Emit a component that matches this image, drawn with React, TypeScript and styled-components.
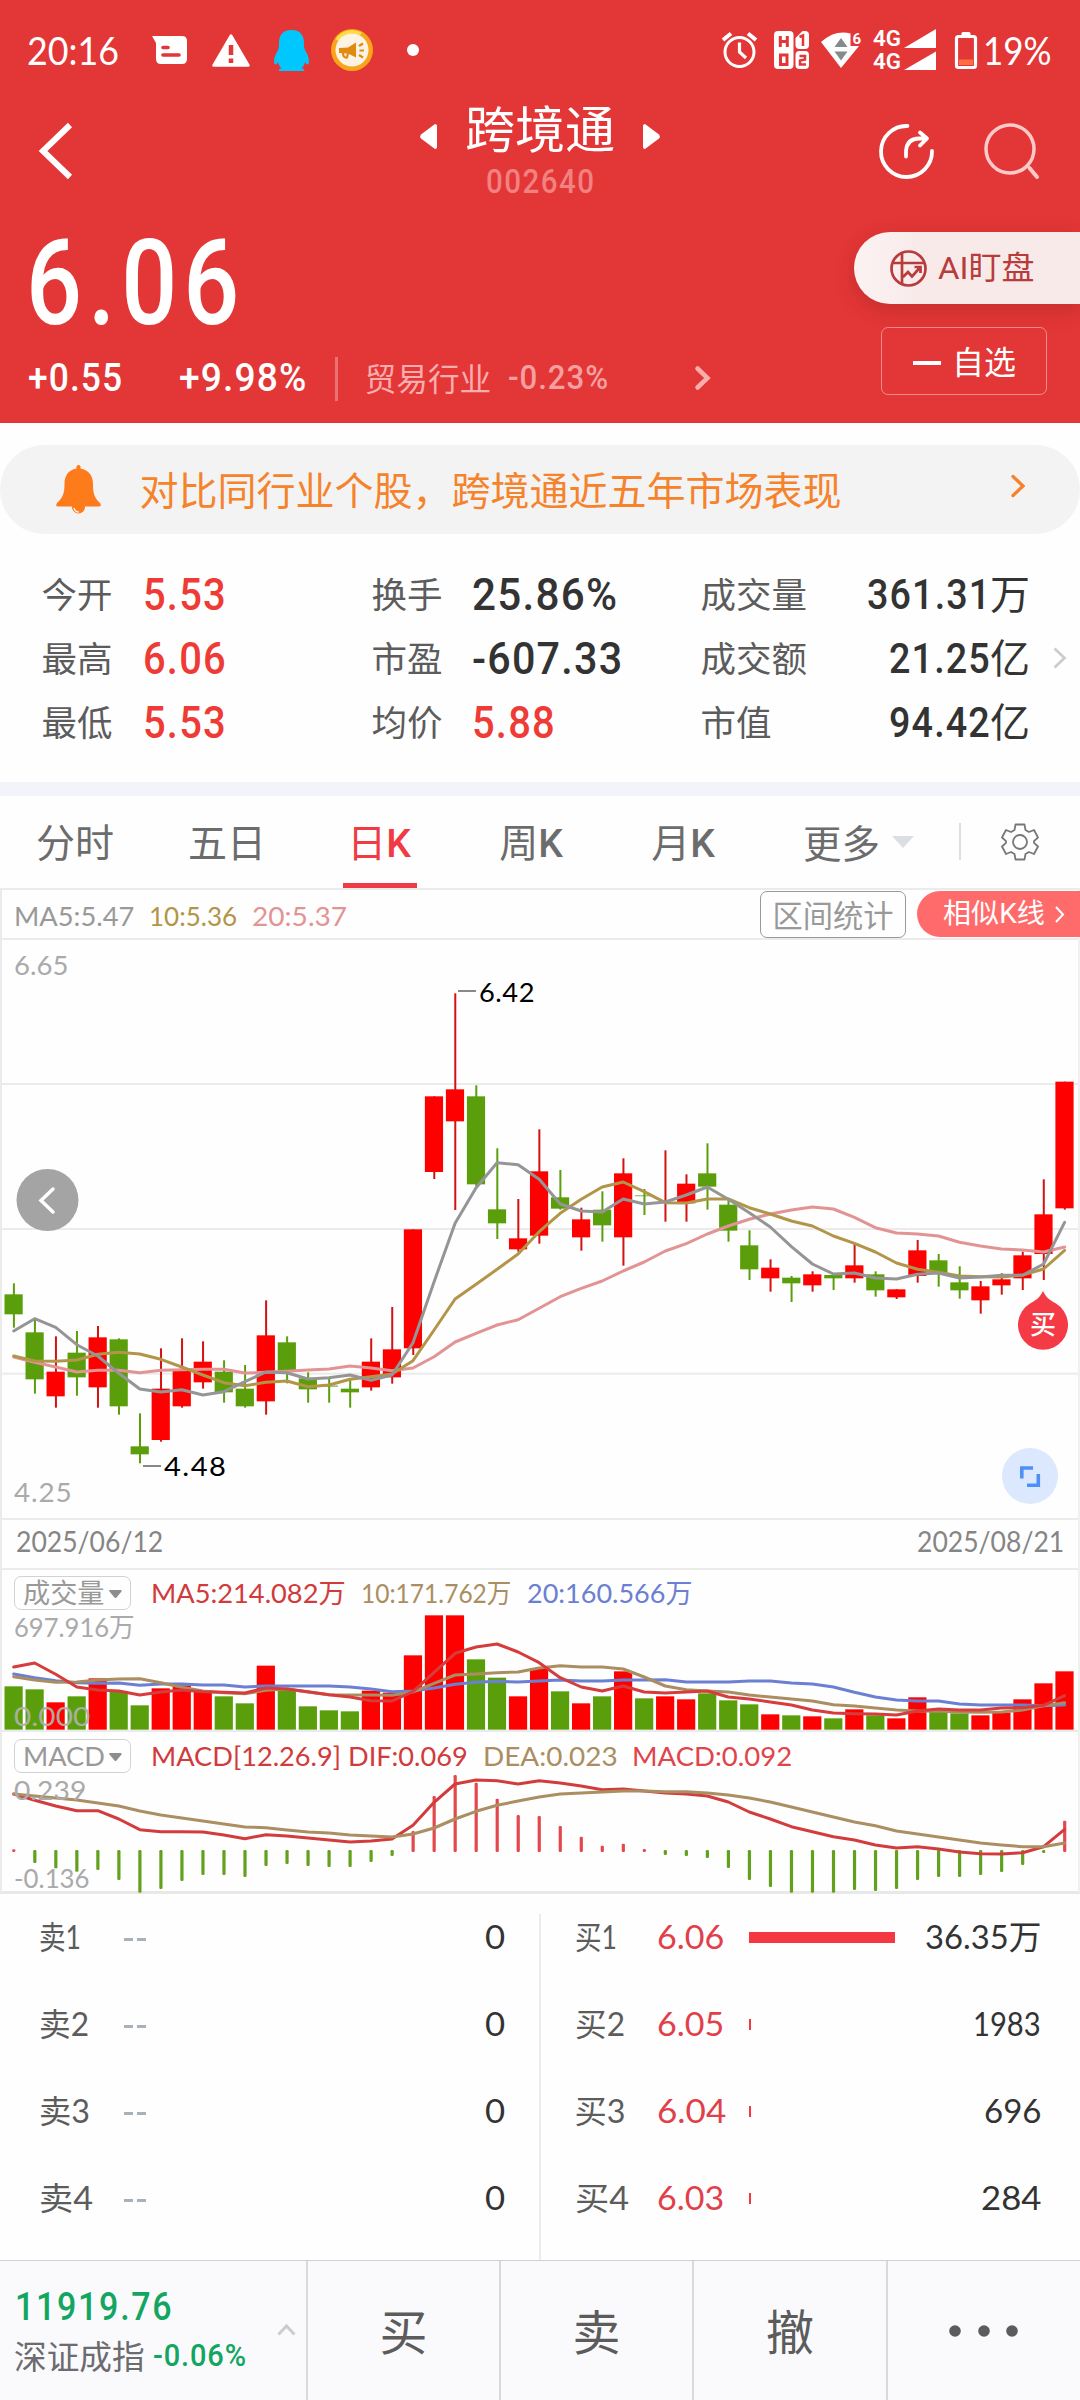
import React, { useLayoutEffect, useRef, useState } from 'react';
import styled, { createGlobalStyle, css } from 'styled-components';

const DIN = `Roboto, "Noto Sans CJK SC", sans-serif`;
const GEO = `Lato, "Noto Sans CJK SC", sans-serif`;
const CJK = `"Noto Sans CJK SC", sans-serif`;

const Global = createGlobalStyle`
  * { box-sizing: border-box; }
  body { margin: 0; background: #fefefe; font-family: ${CJK}; color: #333; }
`;

/* ---------- text that keeps to a known column width ---------- */

const FitBox = styled.span<{ $w: number; $ml: number; $up: number }>`
  display: block;
  flex: none;
  width: ${p => p.$w}px;
  margin-left: ${p => p.$ml}px;
  margin-top: ${p => p.$up}px;
  white-space: nowrap;
`;
const FitInner = styled.span<{ $font: string; $size: number; $weight: number; $color: string; $track: number }>`
  display: inline-block;
  vertical-align: top;
  transform-origin: 0 50%;
  font-family: ${p => p.$font};
  font-size: ${p => p.$size}px;
  font-weight: ${p => p.$weight};
  line-height: 1.2;
  letter-spacing: ${p => p.$track}em;
  margin-right: -${p => p.$track}em;
  color: ${p => p.$color};
`;

type FitProps = {
  w: number;
  size: number;
  children: React.ReactNode;
  font?: string;
  weight?: number;
  color?: string;
  track?: number;
  ml?: number;
  up?: number;
};

function Fit({ w, size, children, font = GEO, weight = 400, color = 'inherit', track = 0, ml = 0, up = 0 }: FitProps) {
  const ref = useRef<HTMLSpanElement>(null);
  const [scale, setScale] = useState(1);
  useLayoutEffect(() => {
    const measure = () => {
      if (ref.current) setScale(w / (ref.current.offsetWidth - track * size));
    };
    measure();
    document.fonts.ready.then(measure);
  }, [w, size, track]);
  return (
    <FitBox $w={w} $ml={ml} $up={up}>
      <FitInner
        ref={ref}
        $font={font}
        $size={size}
        $weight={weight}
        $color={color}
        $track={track}
        style={{ transform: `scaleX(${scale})` }}
      >
        {children}
      </FitInner>
    </FitBox>
  );
}

const Din = (p: FitProps) => <Fit font={DIN} weight={500} track={0.03} {...p} />;

/* ---------- shared pieces ---------- */

const Page = styled.div`
  width: 1080px;
  height: 2400px;
  overflow: hidden;
  display: flex;
  flex-direction: column;
  background: #fefefe;
`;
const Row = styled.div<{ $h: number; $pl?: number }>`
  display: flex;
  align-items: center;
  height: ${p => p.$h}px;
  padding-left: ${p => p.$pl ?? 0}px;
`;
const Icon = styled.svg<{ $ml?: number; $up?: number }>`
  display: block;
  flex: none;
  margin-left: ${p => p.$ml ?? 0}px;
  margin-top: ${p => p.$up ?? 0}px;
  overflow: visible;
`;

/* ---------- header ---------- */

const Header = styled.header`
  height: 423px;
  background: #e33636;
  color: #fff;
`;
const TitleBar = styled.div`
  display: grid;
  grid-template-columns: 420px 240px 1fr;
  height: 108px;
`;
const TitleCol = styled.div`
  display: flex;
  flex-direction: column;
  align-items: center;
`;
const TitleRow = styled.div`
  display: flex;
  justify-content: space-between;
  align-items: center;
  width: 240px;
  height: 60px;
`;
const StockName = styled.h1`
  margin: -9px 0 0;
  font: 400 50px/60px ${CJK};
`;
const PriceArea = styled.div`
  display: flex;
  justify-content: space-between;
  height: 215px;
`;
const PriceCol = styled.div`
  padding: 6px 0 0 26px;
`;
const ActionCol = styled.div`
  display: flex;
  flex-direction: column;
  align-items: flex-end;
  padding-top: 24px;
`;
const AiPill = styled.button`
  display: flex;
  align-items: center;
  width: 226px;
  height: 72px;
  border: 0;
  padding: 0 0 0 36px;
  border-radius: 36px 0 0 36px;
  background: linear-gradient(90deg, #fbf2f2, #f9eaea 30%);
  box-shadow: 0 6px 20px rgba(120, 30, 30, 0.28);
  color: #b83c3c;
`;
const FollowButton = styled.button`
  display: flex;
  align-items: center;
  width: 166px;
  height: 68px;
  margin: 23px 33px 0 0;
  padding: 0 0 2px 31px;
  border: 1.5px solid rgba(255, 255, 255, 0.42);
  border-radius: 7px;
  background: none;
  color: #fff;
  font: 400 32px/40px ${CJK};
`;
const Minus = styled.i`
  width: 28px;
  height: 4px;
  margin: 6px 11px 0 0;
  background: #fff;
`;
const VRule = styled.i<{ $h: number; $ml: number; $color: string; $w?: number }>`
  flex: none;
  width: ${p => p.$w ?? 2}px;
  height: ${p => p.$h}px;
  margin-left: ${p => p.$ml}px;
  background: ${p => p.$color};
`;
const Industry = styled.span`
  margin: -3px 0 0 27px;
  font: 400 31.7px/40px ${CJK};
  color: #f9adad;
`;

/* ---------- notice and stats ---------- */

const Notice = styled.div`
  display: flex;
  align-items: center;
  height: 89px;
  margin-top: 22px;
  padding-left: 56px;
  border-radius: 45px;
  background: #f3f3f3;
`;
const NoticeText = styled.span`
  margin: -4px 0 0 38.5px;
  width: 830px;
  font: 400 39px/60px ${CJK};
  color: #f5832b;
`;
const Stats = styled.section`
  display: grid;
  grid-template-columns: 330px 329px 371px 50px;
  grid-template-rows: repeat(3, 64px);
  align-items: center;
  height: 248px;
  padding: 28px 0 0 0;
`;
const Stat = styled.div`
  display: flex;
  align-items: center;
  padding-left: 41.5px;
`;
const StatLabel = styled.span<{ $w: number }>`
  width: ${p => p.$w}px;
  margin-top: -3px;
  font: 400 35.5px/50px ${CJK};
  color: #5c5c5c;
`;
const StatRight = styled.div`
  flex: 1;
  display: flex;
  justify-content: flex-end;
  align-items: center;
`;
const StatUnit = styled.span`
  font: 400 40px/50px ${CJK};
  color: #333;
  margin-top: -4px;
`;
const Band = styled.div`
  height: 14px;
  background: #f3f4f9;
`;

/* ---------- tabs ---------- */

const Tabs = styled.nav`
  display: flex;
  height: 92px;
`;
const Tab = styled.button<{ $active?: boolean }>`
  display: flex;
  flex-direction: column;
  align-items: center;
  justify-content: space-between;
  width: 152px;
  height: 92px;
  padding: 14px 0 0;
  border: 0;
  background: none;
  font: 400 39px/60px ${CJK};
  color: ${p => (p.$active ? '#f03a44' : '#6c6c6c')};
  b { font: 500 39px/50px ${DIN}; }
  span { display: block; margin-left: -2px; }
  &::after {
    content: '';
    width: 74px;
    height: 5px;
    background: ${p => (p.$active ? '#f03a44' : 'transparent')};
  }
`;
const MoreTab = styled.div`
  display: flex;
  align-items: center;
  height: 92px;
  padding-bottom: 2px;
  margin-left: 43px;
  font: 400 38.5px/60px ${CJK};
  color: #6c6c6c;
`;

/* ---------- chart ---------- */

const ChartFrame = styled.section`
  border: 2px solid #ebebeb;
  border-bottom: 3px solid #e8e8e8;
  border-right-color: #f0f0f0;
  height: 1006px;
`;
const Legend = styled.div`
  display: flex;
  align-items: center;
  height: 48px;
  padding-left: 12px;
`;
const RangeButton = styled.button`
  width: 146px;
  height: 47px;
  padding: 0;
  margin-left: 413px;
  border: 1.5px solid #999;
  border-radius: 7px;
  background: none;
  font: 400 30.3px/41px ${CJK};
  color: #999;
`;
const SimilarButton = styled.button`
  display: flex;
  flex: none;
  align-items: center;
  width: 165px;
  height: 46px;
  margin: 0 -4px 0 11px;
  padding: 0 0 1px 25px;
  border: 0;
  border-radius: 23px 0 0 23px;
  background: #ff6b6b;
  color: #fff;
`;
const Plot = styled.div<{ $h: number }>`
  position: relative;
  height: ${p => p.$h}px;
  margin: 0 -2px;
`;
const Canvas = styled.svg`
  display: block;
`;
const Pin = styled.div<{ $x: number; $y: number }>`
  position: absolute;
  left: ${p => p.$x}px;
  top: ${p => p.$y}px;
`;
const Dates = styled.div`
  display: flex;
  align-items: center;
  justify-content: space-between;
  height: 52px;
  padding: 0 14px 4px 14px;
  border-top: 2px solid #ebebeb;
  border-bottom: 2px solid #ebebeb;
  color: #858585;
`;
const IndicatorHead = styled.div<{ $top: number }>`
  position: absolute;
  left: 14px;
  top: ${p => p.$top}px;
  display: flex;
  align-items: center;
  height: 34px;
`;
const Picker = styled.button`
  display: flex;
  align-items: center;
  width: 117px;
  height: 34px;
  margin: 0;
  padding: 0 0 0 8px;
  border: 1.5px solid #d2d2d2;
  border-radius: 7px;
  background: none;
  color: #999;
`;

const RED = '#fe0000';
const GREEN = '#5a9f0b';
const cx = (i: number) => 13.7 + i * 21.018;

/* candle: direction, high, low, body top, body bottom (thirds of a pixel below the 1200 line) */
type Candle = ['u' | 'd', number, number, number, number];
const CANDLES: Candle[] = [
  ['d', 250, 383, 283, 343], ['d', 355, 581, 397, 538], ['u', 409, 623, 515, 589], ['d', 393, 587, 458, 532],
  ['u', 378, 623, 412, 562], ['d', 415, 644, 418, 619], ['d', 640, 790, 739, 763], ['u', 445, 725, 566, 720],
  ['u', 415, 623, 512, 619], ['u', 424, 566, 485, 547], ['d', 481, 608, 515, 577], ['d', 495, 623, 566, 619],
  ['u', 301, 644, 406, 604], ['d', 409, 550, 427, 512], ['d', 517, 608, 535, 568], ['d', 535, 608, 556, 561],
  ['d', 540, 623, 566, 577], ['u', 415, 572, 485, 562], ['u', 321, 551, 448, 532], ['u', 88, 465, 88, 445],
  ['u', -311, -63, -311, -84], ['u', -620, 30, -332, -236], ['d', -344, -42, -311, -47], ['d', -155, 117, 28, 70],
  ['u', -3, 155, 115, 148], ['u', -212, 131, -86, 107], ['d', -90, 29, -8, 26], ['u', 23, 152, 58, 112],
  ['d', -26, 125, 29, 76], ['u', -125, 197, -80, 112], ['d', -33, 45, -15, -11], ['u', -149, 65, 6, 6],
  ['u', -77, 65, -49, 10], ['d', -170, 29, -80, -40], ['d', -5, 125, 14, 92], ['d', 91, 240, 136, 208],
  ['u', 178, 275, 203, 235], ['d', 228, 306, 233, 250], ['u', 214, 275, 223, 256], ['d', 220, 270, 225, 235],
  ['u', 132, 248, 196, 235], ['d', 214, 290, 223, 271], ['u', 268, 297, 268, 292], ['u', 120, 248, 151, 228],
  ['d', 162, 260, 181, 218], ['d', 199, 296, 247, 271], ['u', 243, 341, 259, 301], ['u', 220, 284, 238, 256],
  ['u', 155, 270, 166, 235], ['u', -62, 240, 43, 162], ['u', -355, 29, -355, 25],
];
const PRICE_MA5 = [393, 356, 382, 434, 468, 520, 567, 576, 569, 585, 575, 545, 516, 518, 537, 533, 525, 541, 525, 428, 245, 70, -37, -112, -106, -62, 12, 33, 36, -3, 12, 6, -15, -39, -2, 38, 81, 140, 192, 222, 219, 234, 237, 223, 219, 234, 231, 226, 226, 192, 67];
const PRICE_MA10 = [468, 483, 484, 480, 463, 457, 462, 478, 501, 525, 548, 557, 547, 543, 560, 555, 538, 530, 522, 482, 390, 297, 253, 208, 162, 95, 40, -2, -39, -54, -25, 8, 9, -3, -3, 23, 42, 63, 78, 108, 130, 156, 189, 208, 217, 228, 230, 231, 225, 207, 151];
const PRICE_MA20 = [471, 487, 501, 516, 511, 511, 518, 511, 509, 508, 508, 519, 517, 514, 510, 507, 498, 504, 512, 504, 470, 426, 400, 375, 359, 325, 290, 265, 243, 213, 186, 153, 131, 102, 78, 58, 42, 30, 21, 27, 52, 83, 99, 102, 108, 127, 138, 147, 150, 156, 141];

/* volume and MACD data: thirds of a pixel below the 1560 line */
const VOLUME = [379, 388, 427, 409, 355, 394, 436, 385, 376, 392, 409, 430, 317, 390, 439, 451, 454, 392, 398, 286, 166, 166, 298, 353, 409, 325, 394, 430, 409, 334, 415, 409, 418, 400, 421, 433, 463, 466, 469, 475, 448, 466, 475, 412, 455, 460, 466, 458, 418, 370, 334];
const VOL_MA5 = [321, 309, 343, 381, 390, 393, 405, 396, 390, 395, 397, 399, 384, 387, 395, 404, 411, 422, 423, 395, 337, 280, 261, 252, 276, 308, 353, 381, 393, 378, 396, 399, 396, 393, 411, 417, 426, 435, 450, 459, 461, 462, 465, 453, 447, 450, 450, 444, 443, 436, 407];
const VOL_MA10 = [350, 360, 367, 366, 360, 357, 356, 368, 382, 393, 398, 401, 391, 387, 396, 404, 405, 405, 406, 396, 370, 345, 342, 338, 336, 324, 317, 321, 321, 327, 351, 378, 389, 393, 396, 405, 411, 417, 423, 434, 438, 444, 450, 453, 454, 456, 457, 456, 450, 437, 428];
const VOL_MA20 = [342, 353, 362, 368, 370, 369, 376, 372, 372, 375, 375, 381, 378, 378, 378, 378, 381, 387, 395, 393, 384, 373, 367, 364, 366, 363, 360, 363, 363, 360, 360, 359, 366, 366, 366, 363, 363, 369, 372, 381, 397, 411, 420, 423, 423, 432, 435, 435, 435, 437, 435];
const MACD = [868, 909, 925, 935, 930, 960, 998, 987, 963, 945, 945, 951, 918, 912, 918, 921, 921, 906, 888, 813, 708, 645, 668, 716, 765, 768, 798, 830, 857, 851, 867, 885, 888, 894, 924, 960, 981, 998, 998, 998, 990, 993, 987, 960, 951, 951, 945, 936, 915, 879, 782];
const DIF = [702, 721, 738, 752, 752, 777, 809, 815, 815, 816, 825, 836, 824, 828, 834, 840, 846, 843, 837, 796, 727, 672, 660, 662, 672, 662, 669, 678, 689, 687, 693, 699, 702, 708, 726, 756, 777, 800, 815, 830, 840, 855, 864, 860, 867, 876, 881, 882, 878, 860, 808];
const DEA = [702, 708, 714, 720, 729, 738, 753, 765, 774, 783, 792, 801, 803, 810, 816, 819, 825, 828, 831, 822, 804, 777, 754, 736, 723, 711, 702, 699, 696, 693, 693, 695, 695, 699, 705, 714, 726, 741, 756, 771, 786, 797, 813, 822, 831, 840, 849, 855, 860, 860, 849];

function Line({ data, base, color, w = 3 }: { data: number[]; base: number; color: string; w?: number }) {
  return (
    <polyline
      points={data.map((v, i) => `${cx(i).toFixed(1)},${(base + v / 3).toFixed(1)}`).join(' ')}
      fill="none"
      stroke={color}
      strokeWidth={w}
      strokeLinejoin="round"
      strokeLinecap="round"
    />
  );
}

function PriceChart() {
  return (
    <Canvas width="1080" height="580" viewBox="0 938 1080 580">
      {[939, 1084, 1229, 1373.7].map(y => (
        <rect key={y} x="1" y={y - 1} width="1077" height="2" fill="#ebebeb" />
      ))}
      {CANDLES.map(([dir, hi, lo, top, bottom], i) => {
        const color = dir === 'u' ? RED : GREEN;
        const h = (bottom - top) / 3;
        return (
          <g key={i}>
            <rect x={cx(i) - 0.8} y={1200 + hi / 3} width="2" height={(lo - hi) / 3} fill={dir === 'u' ? '#d31212' : color} />
            <rect x={cx(i) - 9.2} y={1200 + top / 3} width="18.2" height={h} fill={color} opacity={h < 2 ? 0.6 : 1} />
          </g>
        );
      })}
      <Line data={PRICE_MA20} base={1200} color="#e29494" />
      <Line data={PRICE_MA10} base={1200} color="#b29548" />
      <Line data={PRICE_MA5} base={1200} color="#959595" />
      <rect x="458" y="990" width="18" height="2" fill="#888" />
      <rect x="143" y="1465" width="18" height="2" fill="#888" />
      <circle cx="47.5" cy="1200" r="31" fill="#a4a4a4" />
      <path d="M53 1189 L41 1200.500 L53 1212" fill="none" stroke="#fff" strokeWidth="3.500" strokeLinecap="round" />
      <path d="M1043 1291 C1047 1299 1051 1300.500 1056 1303.500 A25 25 0 1 1 1030 1303.500 C1035 1300.500 1039 1299 1043 1291 Z" fill="#f43a45" />
      <circle cx="1030" cy="1476" r="28" fill="#dce8fd" />
      <path d="M1021.800 1478.500 V1468 H1033 M1027 1485.300 H1038.300 V1474" fill="none" stroke="#4f8ff7" strokeWidth="3.600" />
    </Canvas>
  );
}

function VolumeChart() {
  return (
    <Canvas width="1080" height="162" viewBox="0 1570 1080 162">
      <rect x="1" y="1730" width="1077" height="2" fill="#ebebeb" />
      {VOLUME.map((v, i) => (
        <rect key={i} x={cx(i) - 9.2} y={1560 + v / 3} width="18.2" height={(509 - v) / 3} fill={CANDLES[i][0] === 'u' ? RED : GREEN} />
      ))}
      <Line data={VOL_MA20} base={1560} color="#6b80d2" />
      <Line data={VOL_MA10} base={1560} color="#aa8e62" />
      <Line data={VOL_MA5} base={1560} color="#d63c3c" />
    </Canvas>
  );
}

function MacdChart() {
  return (
    <Canvas width="1080" height="161" viewBox="0 1732 1080 161">
      {MACD.map((v, i) => {
        const up = i === 0 || i === 50 || (i >= 19 && i <= 30);
        const a = up ? v : 870;
        const b = up ? 876 : v;
        return <rect key={i} x={cx(i) - 1.5} y={1560 + a / 3} width="3.2" height={(b - a) / 3} rx="1.2" fill={up ? '#e4484d' : '#62a01d'} />;
      })}
      <Line data={DIF} base={1560} color="#d33c3c" />
      <Line data={DEA} base={1560} color="#ab8e62" />
    </Canvas>
  );
}

/* ---------- order book ---------- */

const Book = styled.section`
  display: grid;
  grid-template-columns: 539px 541px;
  height: 366px;
`;
const BookSide = styled.div<{ $rule?: boolean }>`
  ${p => p.$rule && css`
    background: linear-gradient(#ececec, #ececec) 0 20px / 2px 100% no-repeat;
  `}
`;
const BookRow = styled.div<{ $pl: number }>`
  display: flex;
  align-items: center;
  height: 87px;
  padding: 0 0 1px ${p => p.$pl}px;
`;
const RightEnd = styled.span<{ $pr: number }>`
  flex: 1;
  display: flex;
  justify-content: flex-end;
  padding-right: ${p => p.$pr}px;
`;
const Slot = styled.span<{ $w: number }>`
  flex: none;
  width: ${p => p.$w}px;
`;
const DepthBar = styled.i`
  height: 11px;
  background: #f43842;
`;
const DashMark = styled.i`
  width: 9px;
  height: 3px;
  margin: 4px 4px 0 0;
  background: #a9b1ba;
`;

const BIDS = [
  { name: '买1', nw: 41, price: '6.06', pw: 67, depth: 146, vol: '36.35万', vw: 116 },
  { name: '买2', nw: 49, price: '6.05', pw: 67, depth: 2, vol: '1983', vw: 68 },
  { name: '买3', nw: 50, price: '6.04', pw: 69, depth: 2, vol: '696', vw: 57 },
  { name: '买4', nw: 53, price: '6.03', pw: 67, depth: 2, vol: '284', vw: 60 },
];
const ASKS = [
  { name: '卖1', nw: 41 },
  { name: '卖2', nw: 49 },
  { name: '卖3', nw: 50 },
  { name: '卖4', nw: 53 },
];

/* ---------- bottom bar ---------- */

const BottomBar = styled.footer`
  display: grid;
  grid-template-columns: 308px 193px 193px 194px 192px;
  height: 140px;
  border-top: 1px solid #cfcfcf;
  background: #fafafc;
`;
const IndexCell = styled.div`
  display: flex;
  align-items: center;
  padding-left: 15px;
  border-right: 2px solid #d9d9db;
`;
const IndexText = styled.div`
  width: 262px;
  padding-top: 2px;
`;
const IndexName = styled.span`
  margin-left: -1px;
  font: 400 32.7px/40px ${CJK};
  color: #6b6b70;
`;
const ActionButton = styled.button<{ $last?: boolean }>`
  display: flex;
  align-items: center;
  justify-content: center;
  padding: 0 0 3px;
  border: 0;
  border-right: ${p => (p.$last ? 0 : 2)}px solid #d9d9db;
  background: none;
  font: 400 48px/60px ${CJK};
  color: #5c5c5c;
`;

const Caret = ({ ml }: { ml: number }) => (
  <Icon width="13" height="9" viewBox="0 0 13 9" $ml={ml} $up={2}>
    <path d="M0 1 Q0 0 1 0 H12 Q13 0 12.500 1.500 L7.500 7.500 Q6.500 8.600 5.500 7.500 L.5 1.500 Z" fill="#8d8d8d" />
  </Icon>
);

function StatusBar() {
  return (
    <Row $h={100} $pl={27}>
      <Fit w={92} size={38.5}>20:16</Fit>
      <Icon width="35" height="28" viewBox="0 0 35 28" $ml={33}>
        <path d="M0 0 H30 Q35 0 35 5 V23 Q35 28 30 28 H9 Q4 28 4 23 V7 Z" fill="#fff" />
        <path d="M11 11.500 H16 M11 19 H27" stroke="#e33636" strokeWidth="3.600" strokeLinecap="round" />
      </Icon>
      <Icon width="38" height="33" viewBox="0 0 38 33" $ml={25}>
        <path d="M19 1.500 L36.500 31.500 H1.500 Z" fill="#fff" stroke="#fff" strokeWidth="2.500" strokeLinejoin="round" />
        <path d="M19 11 V21 M19 24.500 V29" stroke="#e33636" strokeWidth="4.500" />
      </Icon>
      <Icon width="35" height="41" viewBox="0 0 35 41" $ml={24}>
        <path d="M17.500 0 C8 0 5 6 5 13 C5 17 5 18 3 22 C0 27 -.5 31 .5 34 C1.500 35 3 34 4 32 C4.500 35 6 37 7.500 38 C5 39 4.500 40 5 41 H30 C30.500 40 30 39 27.500 38 C29 37 30.500 35 31 32 C32 34 33.500 35 34.500 34 C35.500 31 35 27 32 22 C30 18 30 17 30 13 C30 6 27 0 17.500 0 Z" fill="#00c8ff" />
      </Icon>
      <Icon width="42" height="42" viewBox="0 0 42 42" $ml={22}>
        <circle cx="21" cy="21" r="21" fill="#f9a51b" />
        <path d="M6 11 A18 18 0 0 1 30 5" fill="none" stroke="#ffdc3f" strokeWidth="3.500" />
        <circle cx="21" cy="21" r="16.500" fill="#fdf3e4" />
        <path d="M8 19 L17 18.500 L25 13.500 V28.500 L17 24.500 L8 24 Z" fill="#e2890f" />
        <path d="M12 24 Q12 29 16 28.500 L17 24" fill="none" stroke="#e2890f" strokeWidth="2.200" />
        <path d="M28 17 L32 14.500 M28.500 21.500 H33 M28 26 L32 28.500" stroke="#e2890f" strokeWidth="2.200" />
      </Icon>
      <Icon width="12" height="12" viewBox="0 0 12 12" $ml={34}><circle cx="6" cy="6" r="6" fill="#fff" /></Icon>
      <Icon width="35" height="36" viewBox="0 0 35 36" $ml={303}>
        <circle cx="17.500" cy="20" r="14.500" fill="none" stroke="#fff" strokeWidth="3" />
        <path d="M1 8 L9 1.500 M34 8 L26 1.500" stroke="#fff" strokeWidth="4" />
        <path d="M17.500 10.500 V20 L24 26" fill="none" stroke="#fff" strokeWidth="3.200" />
      </Icon>
      <Icon width="36" height="38" viewBox="0 0 36 38" $ml={17}>
        <rect x="0" y="0" width="19.500" height="38" rx="4" fill="#fff" />
        <path d="M21.500 7 L28.500 0 H31 Q35 0 35 4 V14 Q35 18 31 18 H25.500 Q21.500 18 21.500 14 Z M25.500 20 H31 Q35 20 35 24 V34 Q35 38 31 38 H25.500 Q21.500 38 21.500 34 V24 Q21.500 20 25.500 20 Z" fill="#fff" />
        <path d="M6.300 5 V16 M13.300 5 V16 M6.300 10.500 H13.300 M6.500 24 H13 V33.500 H6.500 Z" fill="none" stroke="#e33636" strokeWidth="3" />
        <path d="M25.500 6 L29 4.500 V15 M25.500 25 H31 V28.500 L26 29.500 V33.500 H32" fill="none" stroke="#e33636" strokeWidth="2.500" />
      </Icon>
      <Icon width="40" height="36" viewBox="0 0 40 36" $ml={11}>
        <path d="M0 10 Q14 -2.500 29.500 1.500 V14 H38 L20 36 Z" fill="#fff" />
        <path d="M20 6 L26.500 15 H13.500 Z M13.500 19.500 H26.500 L20 28.500 Z" fill="#858a8a" />
        <text x="31.500" y="12" fontFamily="Roboto" fontWeight="700" fontSize="15" fill="#fff">6</text>
      </Icon>
      <Icon width="64" height="42" viewBox="0 0 64 42" $ml={12}>
        <text x="0" y="17" fontFamily="Roboto" fontWeight="600" fontSize="22.500" fill="#fff" textLength="28" lengthAdjust="spacingAndGlyphs">4G</text>
        <text x="0" y="39.500" fontFamily="Roboto" fontWeight="600" fontSize="22.500" fill="#fff" textLength="28" lengthAdjust="spacingAndGlyphs">4G</text>
        <path d="M31 19 L63 0 V19 Z M31 41 L63 22.500 V41 Z" fill="#fff" />
      </Icon>
      <Icon width="22" height="37" viewBox="0 0 22 37" $ml={18}>
        <rect x="6.500" y="0" width="9" height="5" rx="1.500" fill="#fff" />
        <rect x="1.500" y="4.500" width="19" height="31" rx="2" fill="none" stroke="#fff" strokeWidth="3.200" />
        <rect x="4" y="27.500" width="14" height="5.500" fill="#ff6d42" />
      </Icon>
      <Fit w={69} size={39} ml={6} up={1}>19%</Fit>
    </Row>
  );
}

function StockHeader() {
  return (
    <Header>
      <StatusBar />
      <TitleBar>
        <Icon width="33" height="56" viewBox="0 0 33 56" $ml={39} $up={23}>
          <path d="M31 2 L4 28 L31 54" fill="none" stroke="#fff" strokeWidth="6" />
        </Icon>
        <TitleCol>
          <TitleRow>
            <Icon width="17" height="25" viewBox="0 0 17 25" $up={12}><path d="M15 0 Q17 0 17 2 V23 Q17 25 15 25 L1 14.500 Q-.6 12.500 1 10.500 Z" fill="#fff" /></Icon>
            <StockName>跨境通</StockName>
            <Icon width="17" height="25" viewBox="0 0 17 25" $up={12}><path d="M2 0 Q0 0 0 2 V23 Q0 25 2 25 L16 14.500 Q17.600 12.500 16 10.500 Z" fill="#fff" /></Icon>
          </TitleRow>
          <Din w={108} size={34} track={0.05} color="#f28181" up={1}>002640</Din>
        </TitleCol>
        <Row $h={102}>
          <Icon width="54" height="55" viewBox="0 0 54 55" $ml={220}>
            <path d="M27.500 2 A25.500 25.500 0 1 0 52 27" fill="none" stroke="#fff" strokeWidth="3.800" strokeLinecap="round" />
            <path d="M26 32.500 V27 Q27 14.500 39 14.500 H46 M40 8.500 L47 14.500 L40 21.500" fill="none" stroke="#fff" strokeWidth="3.800" strokeLinecap="round" strokeLinejoin="round" />
          </Icon>
          <Icon width="54" height="56" viewBox="0 0 54 56" $ml={51}>
            <circle cx="25" cy="26" r="24" fill="none" stroke="#fdc9c9" strokeWidth="3.500" />
            <path d="M44.500 45 L52 54" stroke="#fdc9c9" strokeWidth="4" strokeLinecap="round" />
          </Icon>
        </Row>
      </TitleBar>
      <PriceArea>
        <PriceCol>
          <Din w={213} size={118} track={0.06}>6.06</Din>
          <Row $h={46} $pl={2}>
            <Din w={94} size={38}>+0.55</Din>
            <Din w={127} size={38} ml={57}>+9.98%</Din>
            <VRule $w={2.5} $h={44} $ml={29} $color="#ea7272" />
            <Industry>贸易行业</Industry>
            <Din w={100} size={32.5} ml={17} color="#f5a0a0">-0.23%</Din>
            <Icon width="15" height="24" viewBox="0 0 15 24" $ml={87} $up={-2}>
              <path d="M2.500 2.500 L12.500 12 L2.500 21.500" fill="none" stroke="#f9adad" strokeWidth="4.500" strokeLinecap="round" />
            </Icon>
          </Row>
        </PriceCol>
        <ActionCol>
          <AiPill>
            <Icon width="37" height="37" viewBox="0 0 37 37">
              <circle cx="18.500" cy="18.500" r="17" fill="none" stroke="#b83c3c" strokeWidth="2.700" />
              <path d="M12 3 V34 M2 13 H35 M13 27 L18 22 L22 26.500 L30 17.500 M24.500 17 H30.500 V23" fill="none" stroke="#b83c3c" strokeWidth="2.700" />
            </Icon>
            <Fit w={97} size={32} font={DIN} ml={9}>AI盯盘</Fit>
          </AiPill>
          <FollowButton><Minus />自选</FollowButton>
        </ActionCol>
      </PriceArea>
    </Header>
  );
}

const STATS = [
  ['今开', '5.53', 83, '#ee3b36', '换手', '25.86%', 145, '#333', '成交量', '361.31', 123, '万'],
  ['最高', '6.06', 83, '#ee3b36', '市盈', '-607.33', 150, '#333', '成交额', '21.25', 101, '亿'],
  ['最低', '5.53', 83, '#ee3b36', '均价', '5.88', 83, '#ee3b36', '市值', '94.42', 101, '亿'],
] as const;

function StatsGrid() {
  return (
    <Stats>
      {STATS.map((r, i) => (
        <React.Fragment key={i}>
          <Stat><StatLabel $w={101}>{r[0]}</StatLabel><Din w={r[2]} size={45} up={1} color={r[3]}>{r[1]}</Din></Stat>
          <Stat><StatLabel $w={100}>{r[4]}</StatLabel><Din w={r[6]} size={45} up={1} color={r[7]}>{r[5]}</Din></Stat>
          <Stat>
            <StatLabel $w={110}>{r[8]}</StatLabel>
            <StatRight><Din w={r[10]} size={42.5} color="#333">{r[9]}</Din><StatUnit>{r[11]}</StatUnit></StatRight>
          </Stat>
          <div>
            {i === 1 && (
              <Icon width="14" height="22" viewBox="0 0 14 22" $ml={23}>
                <path d="M1.500 1.500 L11.500 11 L1.500 20.500" fill="none" stroke="#ccc" strokeWidth="2.700" />
              </Icon>
            )}
          </div>
        </React.Fragment>
      ))}
    </Stats>
  );
}

export default function App() {
  return (
    <Page>
      <Global />
      <StockHeader />
      <Notice>
        <Icon width="45" height="49" viewBox="0 0 45 49" $up={-1}>
          <circle cx="22.500" cy="42" r="6.500" fill="#fe7b1c" />
          <path d="M20.500 3.500 Q20 0 22.500 0 Q25 0 24.500 3.500 C33 5 37 11 37 19 C37 30 39 33 44 38 Q46 41.500 43 41.500 H2 Q-1 41.500 1 38 C6 33 8.500 30 8.500 19 C8.500 11 12 5 20.500 3.500 Z" fill="#fe7b1c" />
          <path d="M18 43 Q19 47 23 47" fill="none" stroke="#fff" strokeWidth="1.200" />
        </Icon>
        <NoticeText>对比同行业个股，跨境通近五年市场表现</NoticeText>
        <Icon width="14" height="22" viewBox="0 0 14 22" $ml={41} $up={-7}>
          <path d="M2 1.500 L12 11 L2 20.500" fill="none" stroke="#f5832b" strokeWidth="3.300" strokeLinecap="round" />
        </Icon>
      </Notice>
      <StatsGrid />
      <Band />
      <Tabs>
        <Tab><span>分时</span></Tab>
        <Tab><span>五日</span></Tab>
        <Tab $active><span>日<b>K</b></span></Tab>
        <Tab><span>周<b>K</b></span></Tab>
        <Tab><span>月<b>K</b></span></Tab>
        <MoreTab>
          更多
          <Icon width="22" height="12" viewBox="0 0 22 12" $ml={12} $up={2}><path d="M0 0 H22 L11 12 Z" fill="#dcdee5" /></Icon>
          <VRule $h={37} $ml={45} $w={1.5} $color="#dedede" />
          <Icon width="38" height="38" viewBox="0 0 38 38" $ml={40} $up={2}>
            <path d="M14.500 1.500 H23.500 L24.500 7 L28 9 L33 7 L37 14.500 L33 18.200 V19.800 L37 23.500 L33 31 L28 29 L24.500 31 L23.500 36.500 H14.500 L13.500 31 L10 29 L5 31 L1 23.500 L5 19.800 V18.200 L1 14.500 L5 7 L10 9 L13.500 7 Z" fill="none" stroke="#777" strokeWidth="1.800" strokeLinejoin="round" />
            <circle cx="19" cy="19" r="7" fill="none" stroke="#777" strokeWidth="1.800" />
          </Icon>
        </MoreTab>
      </Tabs>
      <ChartFrame>
        <Legend>
          <Fit w={120} size={27.5} up={2} color="#999">MA5:5.47</Fit>
          <Fit w={88} size={27.5} up={2} ml={15} color="#b29548">10:5.36</Fit>
          <Fit w={95} size={27.5} up={2} ml={15} color="#e29494">20:5.37</Fit>
          <RangeButton>区间统计</RangeButton>
          <SimilarButton>
            <Fit w={102} size={27.8} font={DIN}>相似K线</Fit>
            <Icon width="9" height="17" viewBox="0 0 9 17" $ml={11} $up={1}><path d="M1 1 L8 8.500 L1 16" fill="none" stroke="#fff" strokeWidth="2" /></Icon>
          </SimilarButton>
        </Legend>
        <Plot $h={580}>
          <PriceChart />
          <Pin $x={14} $y={10}><Fit w={54} size={27.5} color="#aaa">6.65</Fit></Pin>
          <Pin $x={479} $y={37}><Fit w={56} size={27.5} track={0.02} color="#000">6.42</Fit></Pin>
          <Pin $x={164} $y={511}><Fit w={62} size={27.5} track={0.05} color="#000">4.48</Fit></Pin>
          <Pin $x={14} $y={537}><Fit w={58} size={27.5} track={0.03} color="#aaa">4.25</Fit></Pin>
          <Pin $x={1030} $y={369}><Fit w={26} size={26} font={CJK} weight={500} color="#fff">买</Fit></Pin>
        </Plot>
        <Dates>
          <Fit w={147} size={28}>2025/06/12</Fit>
          <Fit w={147} size={28}>2025/08/21</Fit>
        </Dates>
        <Plot $h={162}>
          <VolumeChart />
          <IndicatorHead $top={6}>
            <Picker><Fit w={82} size={27.5} font={CJK} up={-3}>成交量</Fit><Caret ml={4} /></Picker>
            <Fit w={195} size={27.5} up={-1} ml={20} color="#d13b3b">MA5:214.082万</Fit>
            <Fit w={150} size={27.5} up={-1} ml={15} color="#aa8e62">10:171.762万</Fit>
            <Fit w={165} size={27.5} up={-1} ml={16} color="#6b80d2">20:160.566万</Fit>
          </IndicatorHead>
          <Pin $x={14} $y={40}><Fit w={121} size={27.5} color="#aaa">697.916万</Fit></Pin>
          <Pin $x={14} $y={129}><Fit w={76} size={27.5} color="rgba(175,175,170,.95)">0.000</Fit></Pin>
        </Plot>
        <Plot $h={161}>
          <MacdChart />
          <IndicatorHead $top={7}>
            <Picker><Fit w={82} size={27.5} up={-1}>MACD</Fit><Caret ml={4} /></Picker>
            <Fit w={317} size={27.5} up={-2} ml={20} color="#d13b3b">MACD[12.26.9] DIF:0.069</Fit>
            <Fit w={135} size={27.5} up={-2} ml={15} color="#aa8e62">DEA:0.023</Fit>
            <Fit w={160} size={27.5} up={-2} ml={14} color="#e0454a">MACD:0.092</Fit>
          </IndicatorHead>
          <Pin $x={14} $y={41}><Fit w={72} size={27.5} color="#aaa">0.239</Fit></Pin>
          <Pin $x={14} $y={129}><Fit w={76} size={27.5} color="#aaa">-0.136</Fit></Pin>
        </Plot>
      </ChartFrame>
      <Book>
        <BookSide>
          {ASKS.map(a => (
            <BookRow key={a.name} $pl={39}>
              <Slot $w={85}><Fit w={a.nw + 1} size={32.3} color="#5c5c5c">{a.name}</Fit></Slot>
              <DashMark /><DashMark />
              <RightEnd $pr={34}><Fit w={20} size={33} color="#333">0</Fit></RightEnd>
            </BookRow>
          ))}
        </BookSide>
        <BookSide $rule>
          {BIDS.map(b => (
            <BookRow key={b.name} $pl={35.5}>
              <Slot $w={82}><Fit w={b.nw + 1} size={32.3} color="#5c5c5c">{b.name}</Fit></Slot>
              <Slot $w={92.5}><Fit w={b.pw} size={33} color="#e1404a">{b.price}</Fit></Slot>
              <DepthBar style={{ width: b.depth }} />
              <RightEnd $pr={39}><Fit w={b.vw} size={33} color="#333">{b.vol}</Fit></RightEnd>
            </BookRow>
          ))}
        </BookSide>
      </Book>
      <BottomBar>
        <IndexCell>
          <IndexText>
            <Din w={157} size={39} track={0.05} color="#13a562">11919.76</Din>
            <Row $h={48}>
              <IndexName>深证成指</IndexName>
              <Din w={93} size={31.5} ml={8} up={3} color="#13a562">-0.06%</Din>
            </Row>
          </IndexText>
          <Icon width="19" height="12" viewBox="0 0 19 12" $ml={0} $up={-1}><path d="M1.500 10.500 L9.500 2 L17.500 10.500" fill="none" stroke="#ccc" strokeWidth="3" /></Icon>
        </IndexCell>
        <ActionButton>买</ActionButton>
        <ActionButton>卖</ActionButton>
        <ActionButton>撤</ActionButton>
        <ActionButton $last>
          <Icon width="70" height="12" viewBox="0 0 70 12" $up={3}>
            <circle cx="6" cy="6" r="5.800" fill="#5c5c5c" /><circle cx="35" cy="6" r="5.800" fill="#5c5c5c" /><circle cx="63" cy="6" r="5.800" fill="#5c5c5c" />
          </Icon>
        </ActionButton>
      </BottomBar>
    </Page>
  );
}
